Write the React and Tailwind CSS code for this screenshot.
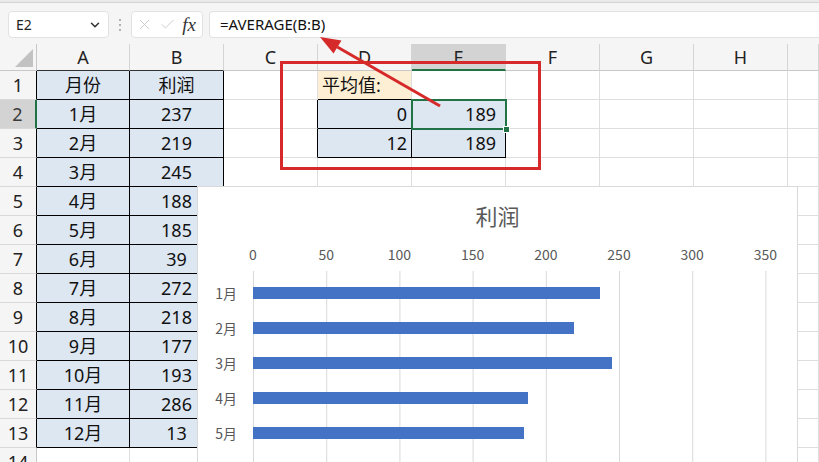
import React from "react";
import { X, Check, ChevronDown } from "lucide-react";

const COLS = ["A", "B", "C", "D", "E", "F", "G", "H", ""];
const MONTHS = ["1月", "2月", "3月", "4月", "5月", "6月", "7月", "8月", "9月", "10月", "11月", "12月"];
const PROFITS = [237, 219, 245, 188, 185, 39, 272, 218, 177, 193, 286, 13];
const ROWS = 14;

// cells that carry a black outline
function inTable(r, c) {
  return (c >= 1 && c <= 2 && r >= 1 && r <= 13) || (c >= 4 && c <= 5 && r >= 2 && r <= 3);
}

function cellValue(r, c) {
  if (c === 1) {
    if (r === 1) return "月份";
    if (r >= 2 && r <= 13) return MONTHS[r - 2];
  }
  if (c === 2) {
    if (r === 1) return "利润";
    if (r >= 2 && r <= 13) return String(PROFITS[r - 2]);
  }
  if (c === 4) {
    if (r === 1) return "平均值:";
    if (r === 2) return "0";
    if (r === 3) return "12";
  }
  if (c === 5 && (r === 2 || r === 3)) return "189";
  return "";
}

function Cell({ r, c }) {
  const rightBlack = inTable(r, c) || inTable(r, c + 1);
  const bottomBlack = inTable(r, c) || inTable(r + 1, c);
  const value = cellValue(r, c);
  const isYellow = r === 1 && c === 4;
  const isBlue = inTable(r, c);
  let align = "justify-center";
  if (c === 4 && r === 1) align = "justify-start pl-[4px]";
  else if (c === 4) align = "justify-end pr-[4px]";
  else if (c === 5) align = "justify-end pr-[9px]";
  return (
    <div
      className={[
        "relative flex items-center border-r border-b text-[18px] leading-none text-[#111] whitespace-nowrap",
        rightBlack ? "border-r-black" : "border-r-[#dedede]",
        bottomBlack ? "border-b-black" : "border-b-[#dedede]",
        isYellow ? "bg-[#fcefd3]" : isBlue ? "bg-[#dde7f2]" : "bg-white",
        align,
      ].join(" ")}
    >
      {value}
      {r === 2 && c === 5 && (
        <div className="absolute left-[-1px] top-[-1px] right-[-2px] bottom-[-2px] z-10 border-2 border-[#217346]">
          <div className="absolute right-[-5px] bottom-[-5px] w-[7px] h-[7px] bg-[#217346] border border-white" />
        </div>
      )}
    </div>
  );
}

function RowHeader({ r }) {
  const selected = r === 2;
  return (
    <div
      className={[
        "flex items-center justify-center border-b border-b-[#d9d9d9] text-[18px] leading-none",
        selected
          ? "bg-[#d3d3d3] border-r-2 border-r-[#217346] text-[#3a3a3a]"
          : r <= 13
          ? "bg-[#f5f5f5] border-r border-r-black text-[#222]"
          : "bg-[#f5f5f5] border-r border-r-[#c8c8c8] text-[#222]",
      ].join(" ")}
    >
      {r}
    </div>
  );
}

function ColHeader({ c }) {
  const selected = c === 5;
  const bottomBlack = c === 1 || c === 2;
  return (
    <div
      className={[
        "flex items-center justify-center border-r border-r-[#d4d4d4] text-[18px] leading-none text-[#222]",
        selected
          ? "bg-[#d3d3d3] border-b-2 border-b-[#217346]"
          : bottomBlack
          ? "bg-[#f5f5f5] border-b border-b-[#333]"
          : "bg-[#f5f5f5] border-b border-b-[#c8c8c8]",
      ].join(" ")}
    >
      {COLS[c - 1]}
    </div>
  );
}

function FormulaBar() {
  return (
    <div className="h-[41px] bg-[#f5f5f5] flex items-start pt-[8px] pl-[8px]">
      <div className="w-[101px] h-[27px] bg-white border border-[#e2e2e2] rounded-[4px] flex items-center justify-between pl-[7px] pr-[6px]">
        <span className="text-[14px] text-[#222]">E2</span>
        <ChevronDown size={14} strokeWidth={2.6} className="text-[#333]" />
      </div>
      <div className="w-[22px] h-[27px] flex flex-col items-center justify-center gap-[3px]">
        <span className="w-[2px] h-[2px] bg-[#9a9a9a] rounded-full" />
        <span className="w-[2px] h-[2px] bg-[#9a9a9a] rounded-full" />
        <span className="w-[2px] h-[2px] bg-[#9a9a9a] rounded-full" />
      </div>
      <div className="w-[72px] h-[27px] bg-white border border-[#e2e2e2] rounded-[4px] flex items-center pl-[4px] pr-[4px] justify-between">
        <X size={17} strokeWidth={1.2} className="text-[#c4c4c4]" />
        <Check size={17} strokeWidth={1.2} className="text-[#c4c4c4]" />
        <span className="font-['Liberation_Serif',serif] italic text-[19px] leading-none text-[#333] pr-[2px]">fx</span>
      </div>
      <div className="ml-[6px] flex-1 h-[27px] bg-white border border-[#e2e2e2] border-r-0 rounded-l-[4px] flex items-center pl-[10px]">
        <span className="text-[15px] text-[#111]">=AVERAGE(B:B)</span>
      </div>
    </div>
  );
}

const TICKS = [0, 50, 100, 150, 200, 250, 300, 350];
const UNIT = 73.2 / 50;

function Chart() {
  return (
    <div className="absolute left-[197px] top-[186px] w-[601px] h-[300px] z-20 bg-white border border-[#d9d9d9] overflow-hidden font-['Noto_Sans_CJK_SC',sans-serif] text-[#595959]">
      <div className="h-[54px] pt-[14px] text-center text-[22px] leading-[28px]">利润</div>
      <div className="relative h-[30px]">
        {TICKS.map((t) => (
          <span
            key={t}
            className="absolute top-[4px] -translate-x-1/2 text-[14px] leading-[18px]"
            style={{ left: 55 + t * UNIT }}
          >
            {t}
          </span>
        ))}
      </div>
      <div className="relative pt-[4px]">
        <svg className="absolute left-[55px] top-0" width="520" height="240">
          {TICKS.map((t) => (
            <line key={t} x1={t * UNIT + 0.5} y1="0" x2={t * UNIT + 0.5} y2="240" stroke="#d9d9d9" strokeWidth="1" />
          ))}
        </svg>
        {MONTHS.map((m, i) => (
          <div key={m} className="relative flex items-center h-[35px]">
            <span className="w-[39px] text-right text-[14px] leading-none">{m}</span>
            <div className="ml-[16px] h-[12px] bg-[#4472c4]" style={{ width: PROFITS[i] * UNIT }} />
          </div>
        ))}
      </div>
    </div>
  );
}

function Annotations() {
  return (
    <>
      <div className="absolute left-[280px] top-[61px] w-[261px] h-[109px] z-30 border-[3px] border-[#d62a2a]" />
      <svg className="absolute left-0 top-0 z-30 pointer-events-none" width="819" height="462">
        <line x1="440" y1="106" x2="337.3" y2="47" stroke="#d62a2a" strokeWidth="3" />
        <polygon points="320,37 341.5,40.5 333.5,53.5" fill="#d62a2a" />
      </svg>
    </>
  );
}

export default function App() {
  return (
    <div className="relative w-[819px] h-[462px] overflow-hidden bg-white font-['Noto_Sans','Noto_Sans_CJK_SC',sans-serif]">
      <div className="h-[3px] bg-[#e9e9e9] border-b border-[#d4d4d4]" />
      <FormulaBar />
      <div className="grid grid-cols-[37px_93px_94px_94px_94px_94px_94px_94px_94px_1fr] grid-rows-[27px_repeat(14,29px)]">
        <div className="relative bg-[#f5f5f5] border-r border-b border-r-[#c8c8c8] border-b-[#c8c8c8]">
          <svg className="absolute left-[15px] top-[5px]" width="18" height="18">
            <polygon points="18,0 18,18 0,18" fill="#c2c2c2" />
          </svg>
        </div>
        {COLS.map((_, i) => (
          <ColHeader key={i} c={i + 1} />
        ))}
        {Array.from({ length: ROWS }, (_, ri) => {
          const r = ri + 1;
          return (
            <React.Fragment key={r}>
              <RowHeader r={r} />
              {COLS.map((_, ci) => (
                <Cell key={ci} r={r} c={ci + 1} />
              ))}
            </React.Fragment>
          );
        })}
      </div>
      <Chart />
      <Annotations />
    </div>
  );
}
